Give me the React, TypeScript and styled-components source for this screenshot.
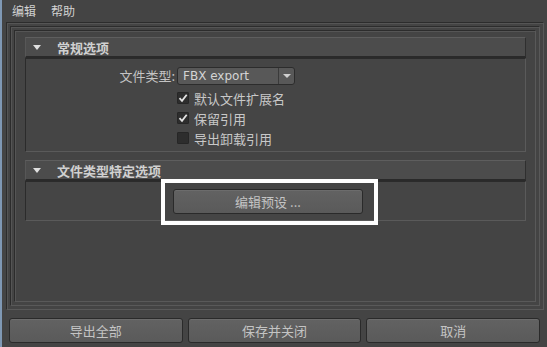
import React from 'react';
import styled, { createGlobalStyle } from 'styled-components';

const GlobalStyle = createGlobalStyle`
  html, body {
    margin: 0;
    padding: 0;
    background: #444444;
  }
  body {
    font-family: "Noto Sans CJK SC", "Liberation Sans", sans-serif;
    font-size: 12px;
    color: #c8c8c8;
  }
`;

const Window = styled.div`
  width: 545px;
  height: 347px;
  border-left: 2px solid #7f98b4;
  background: #444444;
  display: flex;
  flex-direction: column;
  box-sizing: border-box;
`;

const MenuBar = styled.div`
  height: 22px;
  display: flex;
  align-items: center;
  gap: 15px;
  padding-left: 10px;
  font-size: 12px;
  color: #d2d2d2;
`;

const MenuItem = styled.span`
  line-height: 14px;
`;

// three nested bevelled frames round the option area
const Frame = styled.div<{ $pad: string }>`
  display: flex;
  flex-direction: column;
  flex: 1;
  border-top: 1px solid #2c2c2c;
  border-left: 1px solid #2c2c2c;
  border-right: 1px solid #595959;
  border-bottom: 1px solid #595959;
  box-shadow: inset 1px 1px 0 #555555;
  padding: ${(p) => p.$pad};
`;

const OuterSpot = styled.div`
  margin: 0 1px 0 4px;
  height: 288px;
  display: flex;
`;

const ScrollArea = styled.div`
  flex: 1;
  padding: 6px 9px 0 10px;
  display: flex;
  flex-direction: column;
  gap: 8px;
`;

const Section = styled.div`
  display: flex;
  flex-direction: column;
`;

const SectionHeader = styled.div`
  height: 18px;
  display: flex;
  align-items: center;
  background: #4c4c4c;
  border-top: 1px solid #5e5e5e;
  border-left: 1px solid #575757;
  border-right: 1px solid #2f2f2f;
  border-bottom: 2px solid #2a2a2a;
  font-weight: bold;
  font-size: 13px;
  color: #d0d0d0;
`;

const Triangle = styled.span`
  width: 0;
  height: 0;
  margin: 0 16px 0 7px;
  border-left: 4.5px solid transparent;
  border-right: 4.5px solid transparent;
  border-top: 5px solid #e0e0e0;
`;

const SectionBody = styled.div<{ $pt: number; $pb: number }>`
  border-top: 1px solid #2b2b2b;
  border-left: 1px solid #2b2b2b;
  border-right: 1px solid #5a5a5a;
  border-bottom: 1px solid #5a5a5a;
  padding: ${(p) => p.$pt}px 0 ${(p) => p.$pb}px 0;
  background: #454545;
`;

const FormGrid = styled.div`
  display: grid;
  grid-template-columns: 149px 1fr;
  column-gap: 2px;
`;

const Label = styled.div`
  text-align: right;
  font-size: 13px;
  line-height: 18px;
  color: #c4c4c4;
`;

const Dropdown = styled.div`
  width: 116px;
  height: 16px;
  display: flex;
  align-items: stretch;
  background: #585858;
  border: 1px solid #2c2c2c;
  border-radius: 3px;
  margin-bottom: 3px;
`;

const DropText = styled.span`
  flex: 1;
  padding-left: 5px;
  font-family: "DejaVu Sans", "Liberation Sans", sans-serif;
  font-size: 12px;
  line-height: 16px;
  color: #d4d4d4;
`;

const DropArrow = styled.span`
  width: 15px;
  border-left: 1px solid #3a3a3a;
  display: flex;
  align-items: center;
  justify-content: center;
  &::after {
    content: '';
    border-left: 4px solid transparent;
    border-right: 4px solid transparent;
    border-top: 4px solid #cfcfcf;
  }
`;

const CheckRow = styled.label`
  grid-column: 2;
  height: 20px;
  display: flex;
  align-items: center;
  gap: 5px;
  font-size: 13px;
  color: #c8c8c8;
`;

const Box = styled.span`
  width: 12px;
  height: 12px;
  box-sizing: border-box;
  background: #2d2d2d;
  border: 1px solid #262626;
  border-radius: 1px;
  display: flex;
  align-items: center;
  justify-content: center;
`;

const Center = styled.div`
  display: flex;
  justify-content: center;
  padding-right: 15px;
`;

const Highlight = styled.div`
  position: relative;
`;

const HighlightRing = styled.div`
  position: absolute;
  top: -10px;
  bottom: -11px;
  left: -12px;
  right: -15px;
  border: 4px solid #ffffff;
  pointer-events: none;
`;

const Button = styled.button<{ $w?: number }>`
  height: 25px;
  width: ${(p) => (p.$w ? `${p.$w}px` : 'auto')};
  flex: ${(p) => (p.$w ? 'none' : '1')};
  background: linear-gradient(#626262, #5a5a5a);
  border: 1px solid #2a2a2a;
  border-radius: 3px;
  box-shadow: inset 0 1px 0 #6c6c6c;
  color: #c4c4c4;
  font-family: "Noto Sans CJK SC", "Liberation Sans", sans-serif;
  font-size: 13px;
  padding: 0;
`;

const ButtonRow = styled.div`
  display: flex;
  gap: 5px;
  padding: 8px 5px 4px 7px;
`;

const Check = () => (
  <svg width="10" height="10" viewBox="0 0 10 10">
    <path d="M1.5 5.2 L4 7.8 L8.7 1.8" fill="none" stroke="#e2e2e2" strokeWidth="1.8" />
  </svg>
);

export default function App() {
  return (
    <>
      <GlobalStyle />
      <Window>
        <MenuBar>
          <MenuItem>编辑</MenuItem>
          <MenuItem>帮助</MenuItem>
        </MenuBar>
        <OuterSpot>
          <Frame $pad="3px">
            <Frame $pad="3px">
              <Frame $pad="0">
                <ScrollArea>
                  <Section>
                    <SectionHeader>
                      <Triangle />
                      常规选项
                    </SectionHeader>
                    <SectionBody $pt={8} $pb={3}>
                      <FormGrid>
                        <Label>文件类型:</Label>
                        <Dropdown>
                          <DropText>FBX export</DropText>
                          <DropArrow />
                        </Dropdown>
                        <CheckRow>
                          <Box><Check /></Box>
                          默认文件扩展名
                        </CheckRow>
                        <CheckRow>
                          <Box><Check /></Box>
                          保留引用
                        </CheckRow>
                        <CheckRow>
                          <Box />
                          导出卸载引用
                        </CheckRow>
                      </FormGrid>
                    </SectionBody>
                  </Section>
                  <Section>
                    <SectionHeader>
                      <Triangle />
                      文件类型特定选项
                    </SectionHeader>
                    <SectionBody $pt={7} $pb={6}>
                      <Center>
                        <Highlight>
                          <Button $w={190}>编辑预设 ...</Button>
                          <HighlightRing />
                        </Highlight>
                      </Center>
                    </SectionBody>
                  </Section>
                </ScrollArea>
              </Frame>
            </Frame>
          </Frame>
        </OuterSpot>
        <ButtonRow>
          <Button>导出全部</Button>
          <Button>保存并关闭</Button>
          <Button>取消</Button>
        </ButtonRow>
      </Window>
    </>
  );
}
